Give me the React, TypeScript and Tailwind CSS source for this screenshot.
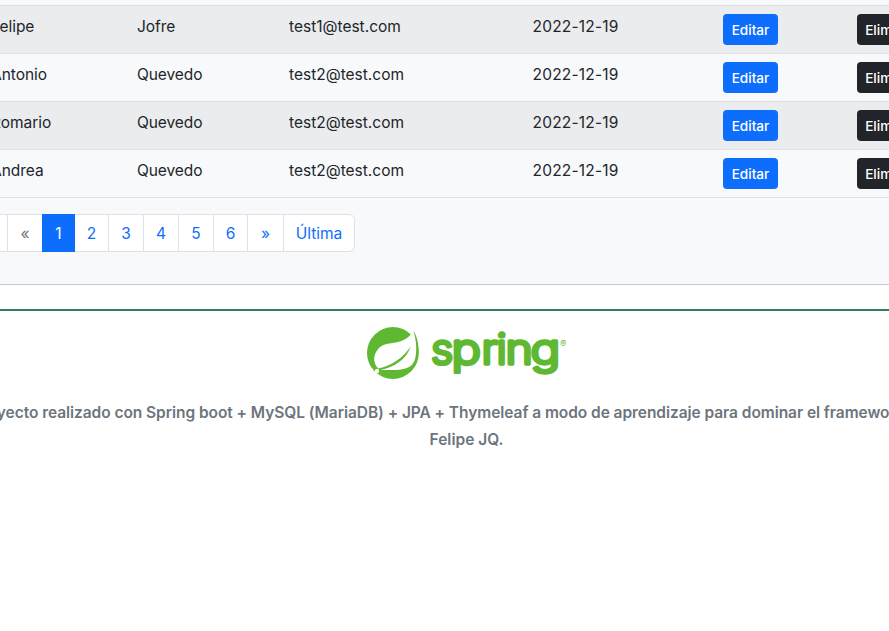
const rows = [
  { name: "Felipe", last: "Jofre", email: "test1@test.com", date: "2022-12-19" },
  { name: "Antonio", last: "Quevedo", email: "test2@test.com", date: "2022-12-19" },
  { name: "Romario", last: "Quevedo", email: "test2@test.com", date: "2022-12-19" },
  { name: "Andrea", last: "Quevedo", email: "test2@test.com", date: "2022-12-19" },
];

const pages = [
  { label: "2", width: "w-[34px]" },
  { label: "3", width: "w-[35px]" },
  { label: "4", width: "w-[35px]" },
  { label: "5", width: "w-[35px]" },
  { label: "6", width: "w-[34px]" },
  { label: "»", width: "w-[36px]" },
  { label: "Última", width: "w-[71px] rounded-r-md" },
];

const letters = [
  { char: "s", x: 431, scale: 1.04 },
  { char: "p", x: 451.4, scale: 1.18 },
  { char: "r", x: 481.6, scale: 1.1 },
  { char: "i", x: 496.6, scale: 1.06 },
  { char: "n", x: 505.6, scale: 1.12 },
  { char: "g", x: 530.6, scale: 1.19 },
];

function SpringLogo() {
  return (
    <svg width="202" height="54" viewBox="366 326 202 54" className="block overflow-visible" fill="#5fb832">
      <circle cx="392.9" cy="353" r="25.9" />
      <path d="M414 329.6C411 336 405 340.7 397 342.3C389 343.9 384 343.5 379.5 347.6C375 351.8 373.6 357.5 374.6 362C375.2 364.8 376.6 367.2 378.4 368.6C391.5 365.6 402.5 358.5 411 346.3C406 360 393.5 367.6 380.6 369.9C391 370.2 406 371 412.2 364.4C420.5 355.5 418.3 343.8 414 329.6Z" fill="white" />
      <path d="M413.4 330.4C419.6 341 421 355 412.8 365.4C417.6 355 417 343 413.4 330.4Z" />
      <circle cx="377" cy="371" r="2.2" fill="white" />
      {letters.map((l) => (
        <text
          key={l.char}
          transform={`translate(${l.x} 364.4) scale(${l.scale} 1)`}
          className="font-['Inter',sans-serif] text-[41.5px] font-light"
          stroke="#5fb832"
          strokeWidth="3.3"
          strokeLinejoin="round"
        >
          {l.char}
        </text>
      ))}
      <text x="560.2" y="347.3" className="font-['Inter',sans-serif] text-[9px]">®</text>
    </svg>
  );
}

export default function App() {
  return (
    <div className="h-[631px] w-[889px] overflow-hidden bg-white font-['Inter',sans-serif] text-[15.5px] leading-6 text-[#212529]">
      <section className="h-[285px] border-b border-[#c8cacd] bg-[#f8f9fb]">
        <div className="h-[6px] border-b border-[#dee0e3]" />
        {rows.map((row, i) => (
          <div
            key={i}
            className={`-ml-[9px] flex h-12 w-[960px] border-b border-[#dee0e3] pt-2 ${i % 2 === 0 ? "bg-[#ebecee]" : ""}`}
          >
            <span className="w-[146px] pt-px tracking-[-0.04px]">{row.name}</span>
            <span className="w-[152px] pt-px tracking-[-0.08px]">{row.last}</span>
            <span className="w-[243.5px] pt-px">{row.email}</span>
            <span className="w-[190.5px] pt-px tracking-[0.2px]">{row.date}</span>
            <span className="w-[134px]">
              <button className="block h-[31px] w-[55px] rounded bg-[#0d6efd] text-[13.6px] font-[450] text-white">Editar</button>
            </span>
            <button className="h-[31px] w-[66px] rounded bg-[#212529] pl-[2px] text-[13.6px] font-[450] text-white">Eliminar</button>
          </div>
        ))}
        <nav className="mt-4 flex h-[38px] text-center leading-[38px] text-[#0d6efd]">
          <span className="w-2 border-y border-r border-[#dee2e6] bg-white" />
          <span className="w-[34px] border-y border-[#dee2e6] bg-white text-[#6c757d]">«</span>
          <span className="w-[33px] bg-[#0d6efd] pt-px text-white">1</span>
          {pages.map((p) => (
            <span key={p.label} className={`border-y border-r border-[#dee2e6] bg-white ${p.width}`}>
              {p.label}
            </span>
          ))}
        </nav>
      </section>
      <footer className="mt-6 border-t-2 border-[#2f7f5f]">
        <div className="flex pt-[15px] pl-[366px]">
          <SpringLogo />
        </div>
        <div className="mt-[19px] font-semibold leading-[27px] text-[#6c757d]">
          <p className="-ml-[28px] whitespace-nowrap tracking-[-0.055px]">
            Proyecto realizado con Spring boot + MySQL (MariaDB) + JPA + Thymeleaf a modo de aprendizaje para dominar el framework
          </p>
          <p className="w-[933px] text-center">Felipe JQ.</p>
        </div>
      </footer>
    </div>
  );
}
